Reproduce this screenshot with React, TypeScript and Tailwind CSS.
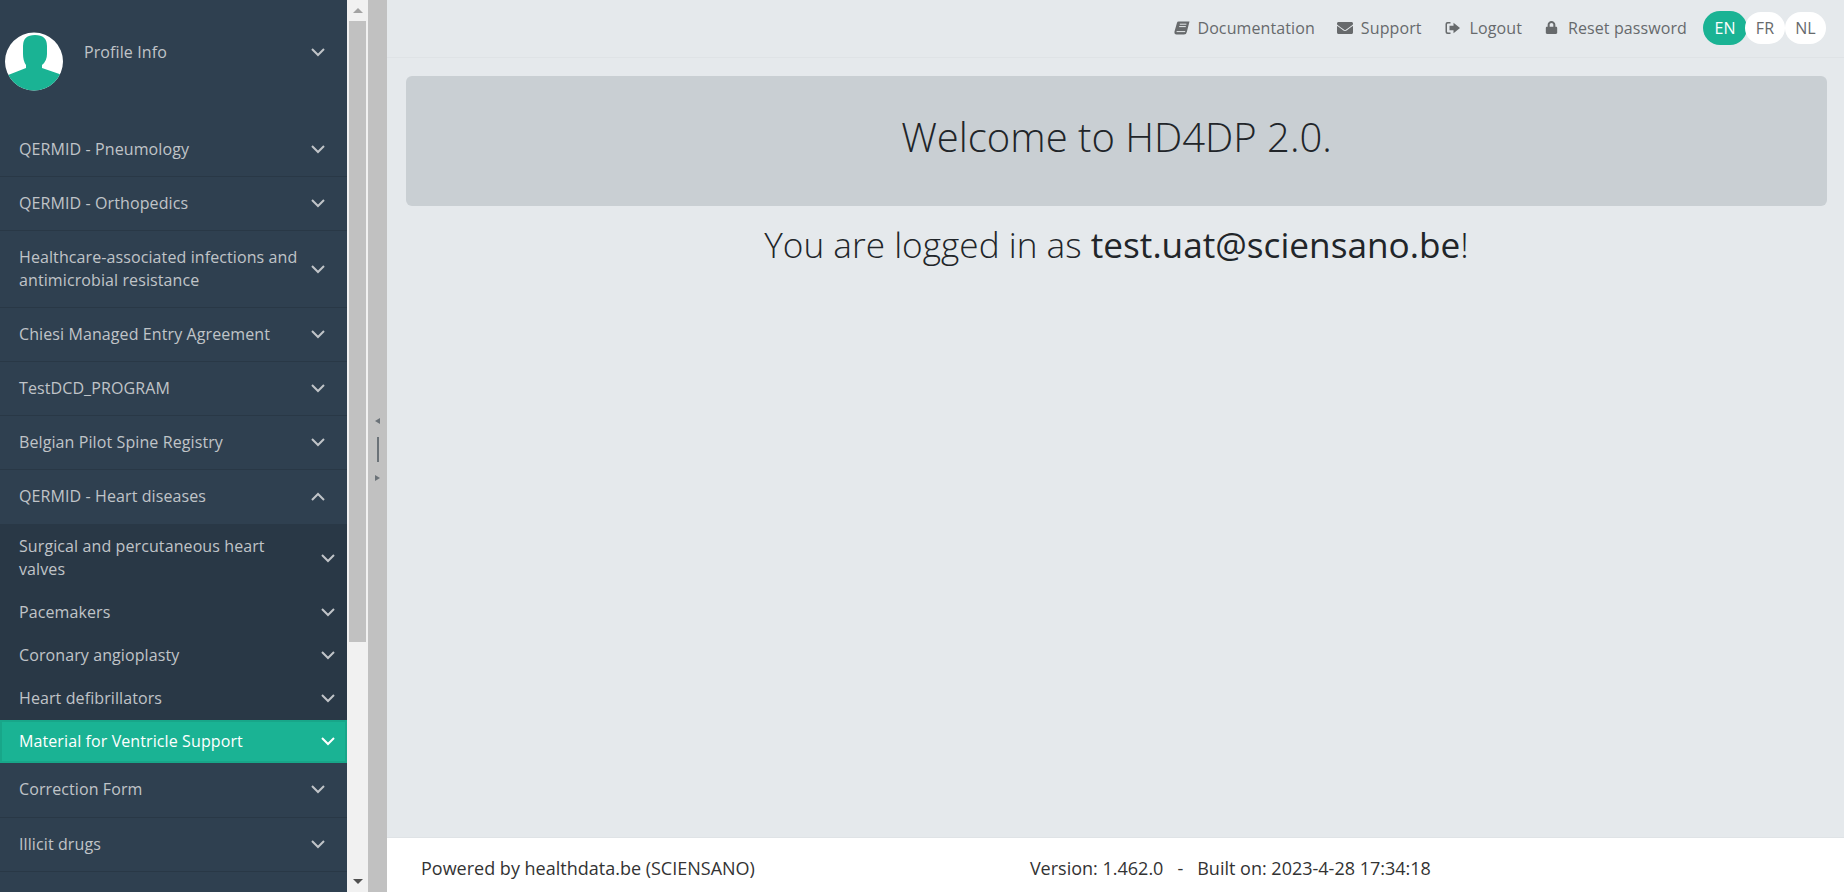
import React from "react";
import { FaEnvelope, FaLock } from "react-icons/fa";

const Chevron = ({ up, className }: { up?: boolean; className?: string }) => (
  <svg width="14" height="9" viewBox="0 0 14 9" className={className} fill="none" stroke="currentColor" strokeWidth="2">
    <path d={up ? "M1 8 L7 2 L13 8" : "M1 1 L7 7 L13 1"} />
  </svg>
);

const main1 = ["QERMID - Pneumology", "QERMID - Orthopedics", "Healthcare-associated infections and antimicrobial resistance", "Chiesi Managed Entry Agreement", "TestDCD_PROGRAM", "Belgian Pilot Spine Registry"];
const subs = ["Surgical and percutaneous heart valves", "Pacemakers", "Coronary angioplasty", "Heart defibrillators"];

const Row = ({ label, up, tall }: { label: string; up?: boolean; tall?: boolean }) => (
  <div className={"flex items-center justify-between pl-[19px] pr-[22px] pt-[15px] border-b border-[#293846] " + (tall ? "pb-[16px]" : "pb-[15px]")}>
    <span className="w-[280px] leading-[23px]">{label}</span>
    <Chevron up={up} />
  </div>
);

const Sub = ({ label }: { label: string }) => (
  <div className="flex items-center justify-between pl-[19px] pr-[12px] py-[10px]">
    <span className="w-[280px] leading-[23px]">{label}</span>
    <Chevron />
  </div>
);

const Active = ({ label }: { label: string }) => (
  <div className="flex items-center justify-between pl-[17px] pr-[10px] py-[8px] bg-[#1ab394] text-white border-2 border-[#18a689] font-medium">
    <span className="w-[280px] leading-[23px]">{label}</span>
    <Chevron />
  </div>
);

export default function App() {
  return (
    <div className="flex h-[892px] w-[1844px] overflow-hidden bg-[#e5e9ec] text-[16px] tracking-[0.1px]" style={{ fontFamily: '"Open Sans", sans-serif' }}>
      <aside className="w-[347px] shrink-0 bg-[#2f4050] text-[#c0c4c8] overflow-hidden">
        <div className="h-[123px] pt-[32px] pl-[5px] pr-[22px] flex items-start justify-between">
          <div className="flex items-start">
            <svg width="58" height="59" viewBox="0 0 58 59">
              <defs>
                <clipPath id="avatarClip"><circle cx="29" cy="29.5" r="29" /></clipPath>
              </defs>
              <circle cx="29" cy="29.5" r="29" fill="#fff" />
              <path clipPath="url(#avatarClip)" d="M18 14 Q18 3 30 3 Q42 3 42 14 L42 22 Q42 29 37 33 L37 36 L60 44 L60 60 L-2 60 L-2 45 L21 36 L21 33 Q18 29 18 22 Z" fill="#1ab394" />
            </svg>
            <span className="ml-[21px] mt-[9px] leading-[23px]">Profile Info</span>
          </div>
          <Chevron className="mt-[16px]" />
        </div>
        {main1.map((m) => <Row key={m} label={m} />)}
        <Row label="QERMID - Heart diseases" up tall />
        <div className="bg-[#293846]">
          {subs.map((s) => <Sub key={s} label={s} />)}
          <Active label="Material for Ventricle Support" />
        </div>
        <Row label="Correction Form" tall />
        <Row label="Illicit drugs" />
      </aside>
      <div className="w-[21px] shrink-0 bg-[#f1f1f1] flex flex-col items-center">
        <div className="h-[21px] flex items-center justify-center shrink-0">
          <div className="w-0 h-0 border-x-[5px] border-x-transparent border-b-[5px] border-b-[#a3a3a3]" />
        </div>
        <div className="w-[17px] h-[621px] bg-[#c1c1c1]" />
        <div className="flex-1" />
        <div className="h-[21px] flex items-center justify-center shrink-0">
          <div className="w-0 h-0 border-x-[5px] border-x-transparent border-t-[5px] border-t-[#505050]" />
        </div>
      </div>
      <div className="w-[19px] shrink-0 bg-[#c1c1c1] flex flex-col items-center pt-[418px]">
        <div className="w-0 h-0 border-y-[3px] border-y-transparent border-r-[5px] border-r-[#6b7278]" />
        <div className="w-[2px] h-[25px] bg-[#6b7278] mt-[13px]" />
        <div className="w-0 h-0 border-y-[3px] border-y-transparent border-l-[5px] border-l-[#6b7278] mt-[13px]" />
      </div>
      <main className="flex-1 flex flex-col min-w-0">
        <header className="h-[58px] shrink-0 border-b border-[#dfe3e6] flex items-center justify-end pr-[18px] pb-[2px] text-[#676a6c]">
          <span className="flex items-center gap-[7px]">
            <svg width="16" height="14" viewBox="0 0 16 14" fill="currentColor">
              <path d="M4.5 0.5H15.5L12.8 11Q12.4 13.5 10 13.5H2.5Q0 13.5 0.5 10.5L3 1.8Q3.3 0.5 4.5 0.5Z" />
              <path d="M5.8 3.2H12.4M5.2 5.6H11.8M2.6 10.6H11.2" stroke="#e5e9ec" strokeWidth="1" fill="none" />
            </svg>
            Documentation
          </span>
          <span className="flex items-center gap-[8px] ml-[22px]"><FaEnvelope className="text-[16px]" />Support</span>
          <span className="flex items-center gap-[9px] ml-[23px]">
            <svg width="16" height="14" viewBox="0 0 16 14" fill="currentColor"><path d="M5.5 1H2.5Q0.5 1 0.5 3V11Q0.5 13 2.5 13H5.5V11.6H3Q2 11.6 2 10.6V3.4Q2 2.4 3 2.4H5.5Z" /><path d="M4.5 4.8H8.5V1.8L15 7L8.5 12.2V9.2H4.5Z" /></svg>
            Logout
          </span>
          <span className="flex items-center gap-[10px] ml-[23px]"><FaLock className="text-[13px]" />Reset password</span>
          <div className="flex items-center ml-[16px]">
            <span className="w-[44px] h-[34px] rounded-[17px] bg-[#1ab394] text-white flex items-center justify-center">EN</span>
            <span className="w-[40px] h-[32px] rounded-[16px] bg-white flex items-center justify-center -ml-[2px]">FR</span>
            <span className="w-[41px] h-[32px] rounded-[16px] bg-white flex items-center justify-center">NL</span>
          </div>
        </header>
        <div className="flex-1 pl-[19px] pr-[17px] pt-[18px]">
          <div className="h-[130px] pb-[9px] rounded-[6px] bg-[#c9cfd3] flex items-center justify-center font-light text-[40px] tracking-normal text-[#212529]">Welcome to HD4DP 2.0.</div>
          <div className="mt-[13px] text-center font-light text-[35.2px] tracking-normal leading-[50px] text-[#212529]">You are logged in as <span className="font-normal">test.uat@sciensano.be</span>!</div>
        </div>
        <footer className="h-[55px] shrink-0 bg-white border-t border-[#dfe3e6] flex items-center text-[#333] text-[18px] tracking-normal pt-[6px]">
          <span className="ml-[34px]">Powered by healthdata.be (SCIENSANO)</span>
          <span className="ml-[275px] whitespace-pre">Version: 1.462.0   -   Built on: 2023-4-28 17:34:18</span>
        </footer>
      </main>
    </div>
  );
}
